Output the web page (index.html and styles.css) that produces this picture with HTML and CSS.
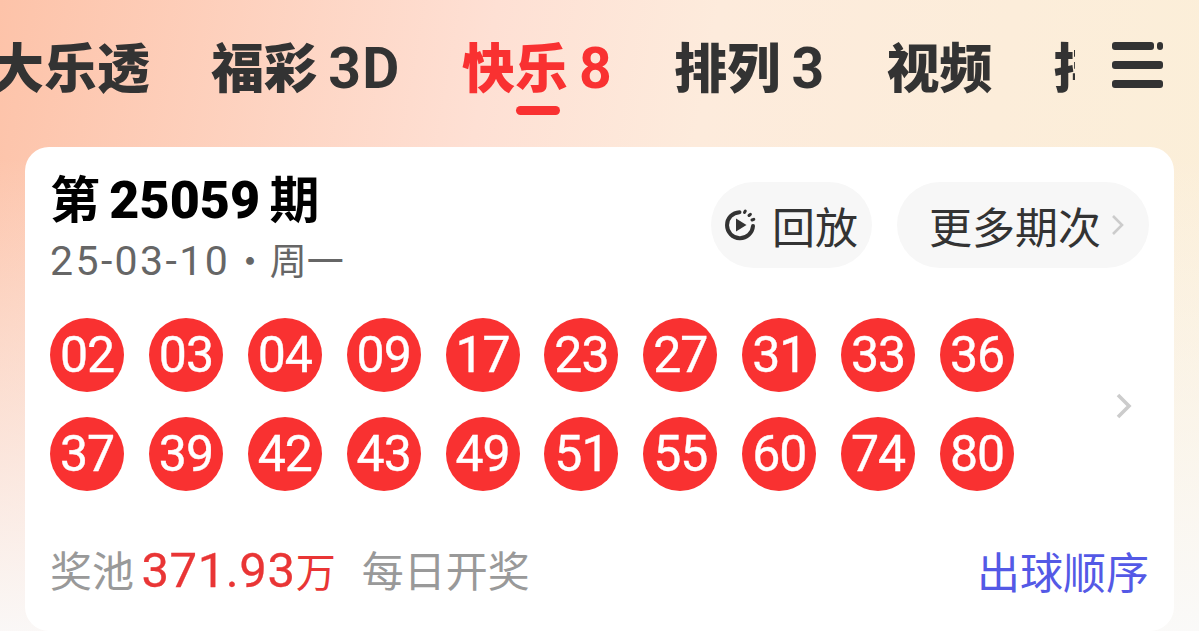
FILE: index.html
```html
<!DOCTYPE html>
<html lang="zh-CN">
<head>
    <meta charset="UTF-8">
    <meta name="viewport" content="width=device-width, initial-scale=1.0">
    <title>快乐8</title>
    <link rel="stylesheet" href="styles.css">
</head>
<body>

<header class="top-bar">
    <nav class="tabs">
        <a class="tab">大乐透</a>
        <a class="tab">福彩 <span class="tab-num">3D</span></a>
        <a class="tab active">快乐 <span class="tab-num">8</span></a>
        <a class="tab">排列 <span class="tab-num">3</span></a>
        <a class="tab">视频</a>
        <a class="tab">排列 <span class="tab-num">5</span></a>
    </nav>
    <svg class="menu-icon" width="51" height="46" viewBox="0 0 51 46">
        <rect x="0" y="0" width="42" height="8" rx="3" fill="#333"/>
        <rect x="45" y="0" width="6" height="8" rx="3" fill="#333"/>
        <rect x="0" y="19" width="51" height="8" rx="3" fill="#333"/>
        <rect x="0" y="38" width="51" height="8" rx="3" fill="#333"/>
    </svg>
</header>

<main class="card">
    <div class="card-head">
        <div class="issue">
            <h1 class="issue-title">第 <span class="issue-num">25059</span> 期</h1>
            <p class="issue-date"><span class="date-num">25-03-10</span> · 周一</p>
        </div>
        <div class="chips">
            <button class="chip chip-replay">
                <svg class="replay-icon" width="32" height="32" viewBox="0 0 32 32">
                    <path d="M15.5 3.2 A13 13 0 1 0 29 17" fill="none" stroke="#333" stroke-width="4" stroke-linecap="round"/>
                    <path d="M20.5 3.5 l.8 -1.4 M25 6.5 l1.4 -1.2 M28 11 l1.8 -.7" fill="none" stroke="#333" stroke-width="3" stroke-linecap="round"/>
                    <path d="M12 9.5 L22.5 16 L12 22.5 Z" fill="#333"/>
                </svg>
                回放
            </button>
            <button class="chip chip-more">
                更多期次
                <svg width="14" height="22" viewBox="0 0 14 22">
                    <path d="M2 2 L11 11 L2 20" fill="none" stroke="#ccc" stroke-width="2.6"/>
                </svg>
            </button>
        </div>
    </div>

    <div class="draw">
        <div class="balls">
            <span class="ball">02</span>
            <span class="ball">03</span>
            <span class="ball">04</span>
            <span class="ball">09</span>
            <span class="ball">17</span>
            <span class="ball">23</span>
            <span class="ball">27</span>
            <span class="ball">31</span>
            <span class="ball">33</span>
            <span class="ball">36</span>
            <span class="ball">37</span>
            <span class="ball">39</span>
            <span class="ball">42</span>
            <span class="ball">43</span>
            <span class="ball">49</span>
            <span class="ball">51</span>
            <span class="ball">55</span>
            <span class="ball">60</span>
            <span class="ball">74</span>
            <span class="ball">80</span>
        </div>
        <svg class="draw-arrow" width="18" height="30" viewBox="0 0 18 30">
            <path d="M3 3 L14 14 L3 25" fill="none" stroke="#ccc" stroke-width="3.6"/>
        </svg>
    </div>

    <div class="card-foot">
        <p class="pool">奖池 <span class="pool-value">371.93<span class="pool-unit">万</span></span><span class="pool-note">每日开奖</span></p>
        <a class="order-link">出球顺序</a>
    </div>
</main>

</body>
</html>
```

FILE: styles.css
```css
body {
    margin: 0;
    height: 631px;
    overflow: hidden;
    font-family: "Noto Sans CJK SC", Roboto, sans-serif;
    background:
        linear-gradient(180deg, rgba(250, 250, 250, 0) 25%, rgba(250, 250, 250, 0.95) 100%),
        linear-gradient(100deg, #fdc3a9 0%, #fee0d4 38%, #fdebdc 55%, #fbefd8 100%);
}

.top-bar {
    display: flex;
    justify-content: space-between;
    align-items: flex-start;
    height: 147px;
    padding-right: 36px;
    box-sizing: border-box;
}

.tabs {
    display: flex;
    gap: 61px;
    width: 1084px;
    height: 147px;
    margin-left: -9px;
    overflow: hidden;
    flex: none;
    white-space: nowrap;
}

.tab {
    position: relative;
    height: 100px;
    font-size: 53px;
    line-height: 130px;
    font-weight: 900;
    color: #333;
    word-spacing: -1px;
}

.tab-num {
    font-family: Roboto, sans-serif;
    font-size: 57px;
    font-weight: 700;
    letter-spacing: 1.5px;
}

.tab.active {
    color: #f93131;
}

.tab.active::after {
    content: "";
    position: absolute;
    left: 50%;
    top: 106px;
    width: 44px;
    height: 9px;
    margin-left: -22px;
    border-radius: 5px;
    background: #f93131;
}

.menu-icon {
    margin-top: 42px;
    flex: none;
}

.card {
    margin: 0 25px;
    height: 484px;
    box-sizing: border-box;
    padding: 16px 25px 0;
    background: #fff;
    border-radius: 24px;
}

.card-head {
    display: flex;
    justify-content: space-between;
    align-items: flex-start;
}

.issue-title {
    margin: 0;
    font-size: 50px;
    line-height: 66px;
    font-weight: 700;
    color: #000;
    word-spacing: -2px;
}

.issue-num {
    font-family: Roboto, sans-serif;
    font-size: 52px;
    font-weight: 900;
}

.issue-date {
    margin: 0;
    font-size: 37px;
    line-height: 50px;
    color: #666;
    word-spacing: -7px;
}

.date-num {
    font-family: Roboto, sans-serif;
    font-size: 41px;
    letter-spacing: 2.4px;
}

.chips {
    display: flex;
    gap: 25px;
    margin-top: 19px;
}

.chip {
    display: flex;
    align-items: center;
    height: 86px;
    border: 0;
    border-radius: 43px;
    background: #f7f7f7;
    color: #333;
    font-family: inherit;
    font-size: 43px;
    padding: 0;
}

.chip-replay {
    width: 161px;
    padding-left: 13px;
    gap: 16px;
}

.chip-more {
    width: 252px;
    padding-left: 32px;
    gap: 10px;
}

.draw {
    display: flex;
    justify-content: space-between;
    align-items: center;
    margin-top: 32px;
}

.balls {
    display: grid;
    grid-template-columns: repeat(10, 74px);
    gap: 25px 24.9px;
}

.ball {
    width: 74px;
    height: 74px;
    border-radius: 50%;
    background: #f93131;
    color: #fff;
    font-family: Roboto, sans-serif;
    font-size: 50px;
    line-height: 74px;
    text-align: center;
    letter-spacing: -1px;
    -webkit-text-stroke: 0.4px #fff;
}

.draw-arrow {
    margin: 4px 16px 0 0;
}

.card-foot {
    display: flex;
    justify-content: space-between;
    align-items: center;
    margin-top: 48px;
}

.pool {
    margin: 0;
    font-size: 42px;
    line-height: 60px;
    color: #999;
    word-spacing: -2px;
}

.pool-value {
    color: #e93535;
    font-family: Roboto, "Noto Sans CJK SC", sans-serif;
    font-size: 49px;
    letter-spacing: 0.6px;
    -webkit-text-stroke: 0.3px #e93535;
}

.pool-unit {
    font-family: "Noto Sans CJK SC", sans-serif;
    font-size: 40px;
    letter-spacing: 0;
    -webkit-text-stroke: 0;
}

.pool-note {
    margin-left: 26px;
}

.order-link {
    font-size: 43px;
    line-height: 60px;
    color: #5459e6;
}
```
